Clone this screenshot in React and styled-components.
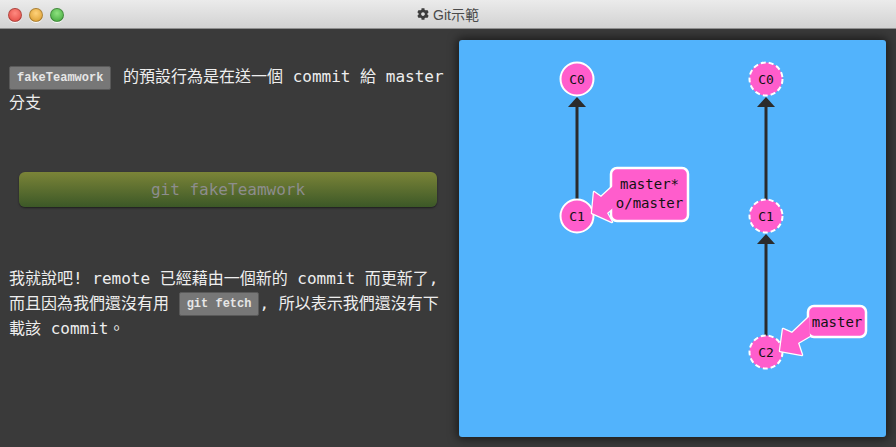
import React from 'react';
import styled, { createGlobalStyle } from 'styled-components';
import { FaCog } from 'react-icons/fa';

const mono = `"DejaVu Sans Mono", "Noto Sans CJK TC", monospace`;
const pink = '#ff5dcc';

const GlobalStyle = createGlobalStyle`
  html, body {
    margin: 0;
    background: #3a3a3a;
  }
`;

const Window = styled.div`
  width: 896px;
  height: 447px;
  display: flex;
  flex-direction: column;
  background: #3a3a3a;
  overflow: hidden;
`;

const TitleBar = styled.div`
  height: 28px;
  flex: none;
  position: relative;
  display: flex;
  align-items: center;
  justify-content: center;
  background: linear-gradient(#ebebeb, #d2d2d2);
  border-bottom: 1px solid #8f8f8f;
`;

const Lights = styled.div`
  position: absolute;
  left: 8px;
  top: 8px;
  display: flex;
  gap: 7px;
`;

const Light = styled.span`
  width: 12px;
  height: 12px;
  border-radius: 50%;
  background: radial-gradient(circle at 50% 35%, ${p => p.$hi}, ${p => p.$color});
  border: 0.5px solid rgba(0, 0, 0, 0.25);
  box-shadow: 0 1px 0 rgba(255, 255, 255, 0.9);
`;

const Title = styled.div`
  display: flex;
  align-items: center;
  gap: 4px;
  font-family: "Liberation Sans", Arial, sans-serif;
  font-size: 14px;
  color: #4a4a4a;

  span {
    font-family: "Liberation Sans", "Noto Sans CJK TC", sans-serif;
  }
`;

const Body = styled.div`
  flex: 1;
  display: flex;
`;

const Lesson = styled.div`
  width: 441px;
  flex: none;
  padding: 35px 9px 0;
`;

const Para = styled.p`
  margin: 0;
  font-family: ${mono};
  font-size: 16px;
  line-height: 25px;
  color: #eeeeee;
  margin-top: ${p => p.$top || 0}px;
`;

const Code = styled.code`
  display: inline-block;
  box-sizing: border-box;
  height: 24px;
  line-height: 22px;
  padding: 0 7px;
  vertical-align: middle;
  font-family: "Liberation Mono", "Courier New", monospace;
  font-weight: bold;
  font-size: 12px;
  color: #e6e6e6;
  background: #777777;
  border: 1px solid #595959;
  border-radius: 2px;
  margin-right: ${p => p.$gap || 0}px;
`;

const CommandButton = styled.div`
  height: 35px;
  margin: 57px 13px 0 10px;
  display: flex;
  align-items: center;
  justify-content: center;
  border-radius: 6px;
  background: linear-gradient(#7b8438, #3c5827);
  box-shadow: 0 1px 2px rgba(0, 0, 0, 0.5);
  font-family: ${mono};
  font-size: 16px;
  color: #8d8d8d;
`;

const Stage = styled.div`
  flex: 1;
  padding: 11px 10px 10px 0;
  display: flex;
`;

const Canvas = styled.div`
  flex: 1;
  background: #52b3fc;
  border-radius: 3px;
  box-shadow: 0 0 10px 2px rgba(0, 0, 0, 0.55);

  svg {
    display: block;
  }
`;

const NodeLabel = styled.text`
  font-family: ${mono};
  font-size: 13px;
  fill: #111;
`;

const TagLabel = styled.text`
  font-family: ${mono};
  font-size: 14px;
  fill: #111;
`;

const Commit = ({ x, y, id, dashed }) => (
  <g>
    <circle
      cx={x}
      cy={y}
      r={16.5}
      fill={pink}
      stroke="#fff"
      strokeWidth={2}
      strokeDasharray={dashed ? '5 3' : undefined}
    />
    <NodeLabel x={x} y={y + 5} textAnchor="middle">{id}</NodeLabel>
  </g>
);

const Edge = ({ x, from, to }) => (
  <g>
    <line x1={x} y1={from} x2={x} y2={to + 9} stroke="#2b2b2b" strokeWidth={3} />
    <polygon points={`${x},${to} ${x - 9},${to + 10} ${x + 9},${to + 10}`} fill="#2b2b2b" />
  </g>
);

const BranchTag = ({ box, arrow, lines }) => {
  const pts = arrow.map(p => p.join(',')).join(' ');
  return (
    <g>
      <polygon points={pts} fill={pink} stroke="#fff" strokeWidth={2.5} strokeLinejoin="round" />
      <rect x={box.x} y={box.y} width={box.w} height={box.h} rx={6} fill={pink} stroke="#fff" strokeWidth={2.5} />
      <polygon points={pts} fill={pink} />
      {lines.map((t, i) => (
        <TagLabel key={t} x={box.x + box.w / 2} y={box.y + 21 + i * 19} textAnchor="middle">{t}</TagLabel>
      ))}
    </g>
  );
};

const Graph = () => (
  <svg width="427" height="397" viewBox="0 0 427 397">
    <Edge x={118} from={160} to={57} />
    <Commit x={118} y={39} id="C0" />
    <Commit x={118} y={176} id="C1" />
    <BranchTag
      box={{ x: 152, y: 128, w: 77, h: 53 }}
      arrow={[[133, 173], [135, 152], [142, 157], [154, 146], [154, 168], [148, 173], [153, 182]]}
      lines={['master*', 'o/master']}
    />

    <Edge x={307} from={160} to={57} />
    <Edge x={307} from={296} to={194} />
    <Commit x={307} y={39} id="C0" dashed />
    <Commit x={307} y={176} id="C1" dashed />
    <Commit x={307} y={312} id="C2" dashed />
    <BranchTag
      box={{ x: 349, y: 266, w: 58, h: 31 }}
      arrow={[[321, 311], [324, 289], [333, 293], [350, 277], [351, 296], [339, 303], [343, 315]]}
      lines={['master']}
    />
  </svg>
);

const App = () => (
  <Window>
    <GlobalStyle />
    <TitleBar>
      <Lights>
        <Light $color="#e2463f" $hi="#ff8a80" />
        <Light $color="#d99a2b" $hi="#ffd27a" />
        <Light $color="#3fa53a" $hi="#8ee27f" />
      </Lights>
      <Title>
        <FaCog size={12} color="#3d3d3d" />
        <span>Git示範</span>
      </Title>
    </TitleBar>
    <Body>
      <Lesson>
        <Para>
          <Code $gap={2}>fakeTeamwork</Code> 的預設行為是在送一個 commit 給 master 分支
        </Para>
        <CommandButton>git fakeTeamwork</CommandButton>
        <Para $top={59}>
          我就說吧! remote 已經藉由一個新的 commit 而更新了, 而且因為我們還沒有用 <Code>git fetch</Code>, 所以表示我們還沒有下載該 commit。
        </Para>
      </Lesson>
      <Stage>
        <Canvas>
          <Graph />
        </Canvas>
      </Stage>
    </Body>
  </Window>
);

export default App;
